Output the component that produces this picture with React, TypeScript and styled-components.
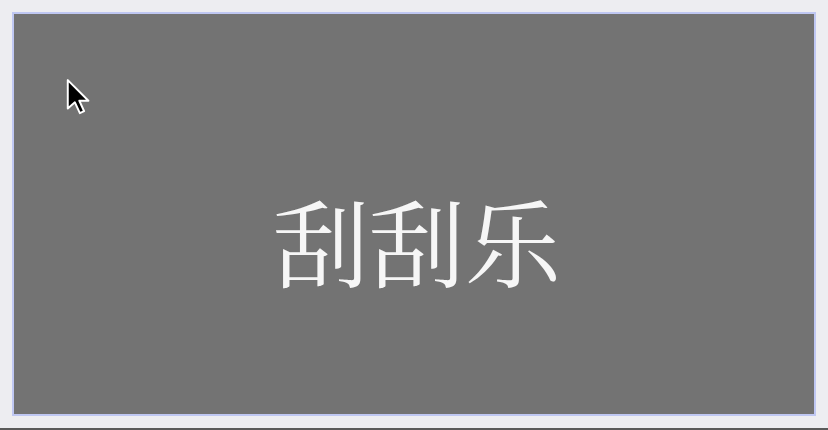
import React from 'react'
import styled, { createGlobalStyle } from 'styled-components'

const GlobalStyle = createGlobalStyle`
    html, body {
        margin: 0;
        padding: 0;
        background: #ededf1;
    }
`

export default function App() {
    return (
        <Page>
            <GlobalStyle />
            <ScratchCard>
                <Label>刮刮乐</Label>
                <Cursor width="24" height="38" viewBox="0 0 13.5 21">
                    <path
                        d="M1 1 L1 17 L5 13.5 L7.8 19.6 L10.2 18.5 L7.5 12.6 L12.6 12.6 Z"
                        fill="#000"
                        stroke="#fff"
                        strokeWidth="1.1"
                        strokeLinejoin="round"
                    />
                </Cursor>
            </ScratchCard>
            <BottomEdge />
        </Page>
    )
}

const Page = styled.div`
    display: flex;
    flex-direction: column;
    height: 430px;
    width: 828px;
    box-sizing: border-box;
    padding: 12px 12px 0 12px;
`

const ScratchCard = styled.div`
    position: relative;
    display: flex;
    justify-content: center;
    align-items: center;
    box-sizing: border-box;
    width: 804px;
    height: 404px;
    padding-top: 50px;
    padding-left: 6px;
    background: #737373;
    border: 2px solid #bfc7f2;
`

const Label = styled.div`
    font-family: "Noto Serif CJK SC", "Noto Sans CJK SC", serif;
    font-size: 96px;
    line-height: 1;
    color: #f6f6f6;
    filter: blur(0.6px);
    letter-spacing: 0;
`

const Cursor = styled.svg`
    position: absolute;
    left: 52px;
    top: 64px;
`

const BottomEdge = styled.div`
    margin-top: auto;
    margin-left: -12px;
    margin-right: -12px;
    height: 2px;
    background: #5a5a5a;
`
